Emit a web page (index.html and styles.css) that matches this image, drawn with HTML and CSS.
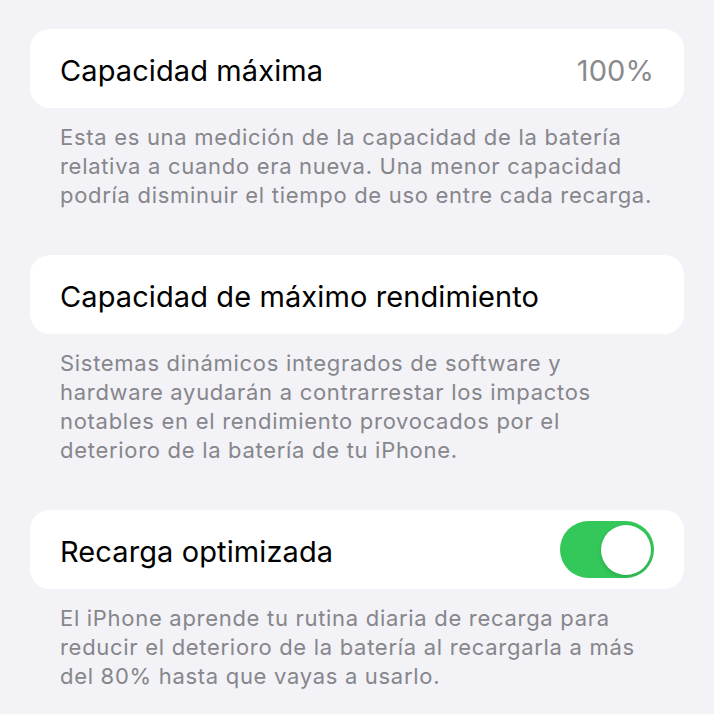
FILE: index.html
```html
<!DOCTYPE html>
<html lang="es">
<head>
<meta charset="utf-8">
<link rel="stylesheet" href="styles.css">
</head>
<body>
<div class="page">
  <section class="group">
    <div class="card">
      <span class="title">Capacidad máxima</span>
      <span class="value">100%</span>
    </div>
    <p class="footer">Esta es una medición de la capacidad de la batería relativa a cuando era nueva. Una menor capacidad podría disminuir el tiempo de uso entre cada recarga.</p>
  </section>
  <section class="group">
    <div class="card">
      <span class="title">Capacidad de máximo rendimiento</span>
    </div>
    <p class="footer">Sistemas dinámicos integrados de software y hardware ayudarán a contrarrestar los impactos notables en el rendimiento provocados por el deterioro de la batería de tu iPhone.</p>
  </section>
  <section class="group">
    <div class="card">
      <span class="title">Recarga optimizada</span>
      <span class="toggle on"><span class="knob"></span></span>
    </div>
    <p class="footer">El iPhone aprende tu rutina diaria de recarga para reducir el deterioro de la batería al recargarla a más del 80% hasta que vayas a usarlo.</p>
  </section>
</div>
</body>
</html>
```

FILE: styles.css
```css
html, body {
  margin: 0;
  padding: 0;
  background: #F2F2F7;
}
body {
  font-family: Inter, "Liberation Sans", sans-serif;
  -webkit-font-smoothing: antialiased;
}
.page {
  padding: 29px 30px 0 30px;
  display: flex;
  flex-direction: column;
  gap: 45px;
}
.group {
  display: flex;
  flex-direction: column;
}
.card {
  background: #FFFFFF;
  border-radius: 20px;
  height: 79px;
  box-sizing: border-box;
  padding: 3px 30px 0 30px;
  display: flex;
  align-items: center;
  justify-content: space-between;
}
.title {
  font-size: 29px;
  color: #000000;
  letter-spacing: 0.1px;
}
.value {
  font-size: 29px;
  color: #8A8A8E;
  letter-spacing: 0.1px;
}
.footer {
  margin: 0;
  padding: 15px 30px 0 30px;
  font-size: 22px;
  line-height: 29px;
  letter-spacing: 0.7px;
  color: #86868B;
}
.toggle {
  width: 94px;
  height: 57px;
  border-radius: 28.5px;
  background: #34C759;
  box-sizing: border-box;
  padding: 3.5px;
  display: flex;
  justify-content: flex-end;
  margin-top: -3px;
}
.knob {
  width: 50px;
  height: 50px;
  border-radius: 50%;
  background: #FFFFFF;
  box-shadow: 0 2px 4px rgba(0,0,0,0.15);
}
```
